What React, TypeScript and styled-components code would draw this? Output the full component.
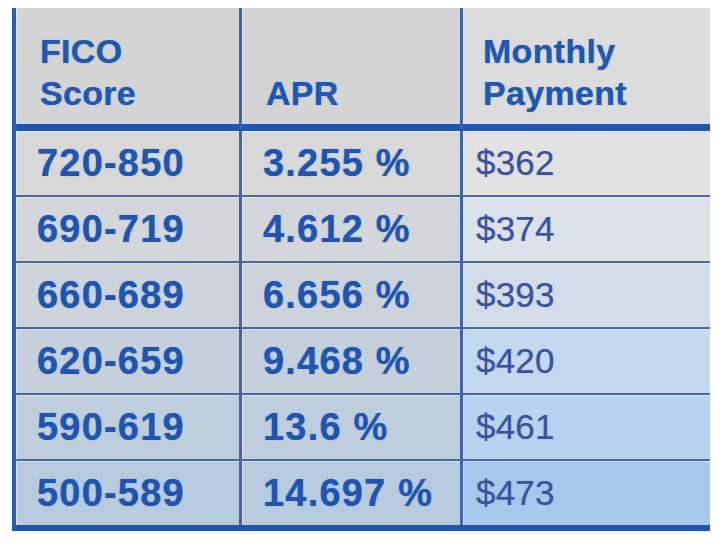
import React from "react";
import styled, { createGlobalStyle } from "styled-components";

const Global = createGlobalStyle`
  html, body { margin: 0; padding: 0; background: #ffffff; }
  body { font-family: "Liberation Sans", Arial, sans-serif; }
`;

const Page = styled.div`
  padding: 8px 0 0 12px;
`;

const Table = styled.div`
  display: grid;
  grid-template-columns: 226px 221px 247px;
  width: 694px;
  border-left: 4px solid #2a5db5;
  border-bottom: 6px solid #1f55ae;
`;

const HeaderCell = styled.div<{ $bg: string; $last?: boolean }>`
  box-sizing: border-box;
  height: 123px;
  padding: 0 0 10px ${(p) => (p.$last ? "20px" : "24px")};
  background: ${(p) => p.$bg};
  border-right: ${(p) => (p.$last ? "none" : "3px solid #3f62b2")};
  border-bottom: 7px solid #1f57ae;
  box-shadow: inset 1px 0 0 rgba(255, 255, 255, 0.45);
  display: flex;
  flex-direction: column;
  justify-content: flex-end;
  color: #1f57b5;
  font-weight: 700;
  font-size: 34px;
  line-height: 42px;
  letter-spacing: 0.3px;
  text-shadow: 0 0 1px rgba(31, 87, 181, 0.7);
`;

const Cell = styled.div<{ $bg: string; $last?: boolean; $money?: boolean; $lastRow?: boolean }>`
  box-sizing: border-box;
  height: ${(p) => (p.$lastRow ? "64px" : "66px")};
  padding-left: ${(p) => (p.$money ? "13px" : "21px")};
  background: ${(p) => p.$bg};
  border-right: ${(p) => (p.$last ? "none" : "3px solid #3f62b2")};
  border-bottom: ${(p) => (p.$lastRow ? "none" : "2px solid #4766b3")};
  box-shadow: inset 1px 1px 0 rgba(255, 255, 255, 0.5);
  display: flex;
  align-items: center;
  color: ${(p) => (p.$money ? "#3a52a0" : "#1f55b2")};
  font-weight: ${(p) => (p.$money ? 400 : 700)};
  font-size: ${(p) => (p.$money ? "35px" : "38px")};
  letter-spacing: ${(p) => (p.$money ? "0.2px" : "1.2px")};
  text-shadow: 0 0 1px ${(p) => (p.$money ? "rgba(58, 82, 160, 0.5)" : "rgba(31, 85, 178, 0.7)")};
  white-space: nowrap;
`;

const rows = [
  { score: "720-850", apr: "3.255 %", pay: "$362", left: "#d8d8d8", right: "#e2e2e2" },
  { score: "690-719", apr: "4.612 %", pay: "$374", left: "#d3d6da", right: "#dce2e9" },
  { score: "660-689", apr: "6.656 %", pay: "$393", left: "#ccd3db", right: "#d2dde9" },
  { score: "620-659", apr: "9.468 %", pay: "$420", left: "#c5d0dc", right: "#c3d9f0" },
  { score: "590-619", apr: "13.6 %", pay: "$461", left: "#bfcedd", right: "#b6d3ef" },
  { score: "500-589", apr: "14.697 %", pay: "$473", left: "#b8cbde", right: "#a6c8ea" },
];

export default function App() {
  return (
    <>
      <Global />
      <Page>
        <Table>
          <HeaderCell $bg="#d4d4d4">
            <span>FICO</span>
            <span>Score</span>
          </HeaderCell>
          <HeaderCell $bg="#d4d4d4">
            <span>APR</span>
          </HeaderCell>
          <HeaderCell $bg="#dcdcdc" $last>
            <span>Monthly</span>
            <span>Payment</span>
          </HeaderCell>
          {rows.map((r, i) => {
            const lastRow = i === rows.length - 1;
            return (
              <React.Fragment key={r.score}>
                <Cell $bg={r.left} $lastRow={lastRow}>{r.score}</Cell>
                <Cell $bg={r.left} $lastRow={lastRow}>{r.apr}</Cell>
                <Cell $bg={r.right} $last $money $lastRow={lastRow}>{r.pay}</Cell>
              </React.Fragment>
            );
          })}
        </Table>
      </Page>
    </>
  );
}
